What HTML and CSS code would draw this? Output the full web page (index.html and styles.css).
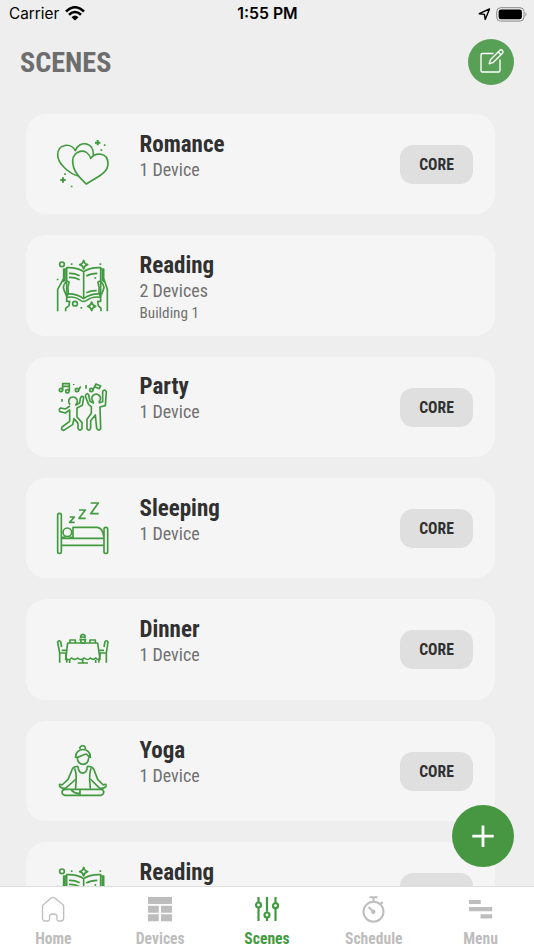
FILE: index.html
```html
<!DOCTYPE html>
<html lang="en">
<head>
<meta charset="utf-8">
<title>Scenes</title>
<link rel="stylesheet" href="styles.css">
</head>
<body>
<svg class="defs" aria-hidden="true">
  <symbol id="hearts" viewBox="0 0 240 240">
    <g transform="translate(0 2)">
    <path d="M124 178C110 164 83 144 83 108C83 78 126 66 137 101C151 82 189 82 189 117C189 148 148 160 124 178Z"/>
    <path d="M100 154C74 148 38 117 38 91C38 58 78 52 91 78C102 47 147 50 145 91"/>
    <path d="M158 46v16M150 54h16M54 158v16M46 166h16" class="thick"/>
    <path d="M179 59v5M169 74v5M60 146v5M80 183v5"/>
    </g>
  </symbol>
  <symbol id="book" viewBox="0 0 240 240">
    <circle cx="51" cy="58" r="7"/>
    <path d="M116 46q2 11 12 13q-10 2-12 13q-2-11-12-13q10-2 12-13ZM140 171q2 11 12 13q-10 2-12 13q-2-11-12-13q10-2 12-13Z"/>
    <circle cx="90" cy="176" r="7"/>
    <path d="M80 55v5M166 55v5M38 101v5M151 96v5M109 186v5"/>
    <path d="M116 80C101 70 84 67 65 68V147C86 145 101 150 116 161C131 150 146 145 167 147V68C148 67 131 70 116 80ZM116 80V161"/>
    <path d="M72 85q16-1 32 7M72 97q16-1 32 7M124 93q13-8 33-8M124 143q16-7 31-6M65 157q25-4 43 10q8 5 16 0q18-14 43-10"/>
    <path d="M65 72H56V112M60 72V108M167 72H176V112M172 72V108M56 100L38 133V199M176 100L187 133V199"/>
    <path d="M72 112C66 103 57 115 55 127C57 139 63 148 65 153C76 147 65 130 70 122ZM159 112C165 103 174 115 177 127C175 139 169 148 167 153C156 147 166 130 161 122Z"/>
    <path d="M65 153V169H74L72 182L62 190V199M167 153V169H158L160 182L168 190V199"/>
  </symbol>
  <symbol id="party" viewBox="0 0 240 240">
    <circle cx="48" cy="69" r="5"/><circle cx="67" cy="73" r="5"/>
    <path d="M53 69V50H73V73M53 58H73"/>
    <circle cx="96" cy="69" r="5"/><path d="M101 69L107 58M86 51v3M123 54v11M51 96v8"/>
    <circle cx="139" cy="69" r="5"/><path d="M144 68L153 51L167 57L161 67M149 59l14 6"/>
    <path d="M76 113A13 13 0 1 1 91 114M146 105A13 13 0 1 1 161 105"/>
    <path d="M75 117L61 126L47 123Q40 128 45 134L61 138L74 129V144"/>
    <path d="M74 144V163L51 180Q47 189 56 190L83 173L87 155L99 169V184Q104 194 111 185V167L96 150V123L112 115L116 91Q110 84 106 94L104 108L91 115"/>
    <path d="M131 113L121 87Q126 75 131 84L135 103L147 109M131 113L139 119V139L126 157V185Q132 194 137 184V161L151 144L155 184Q161 194 167 185L165 120L181 116L184 74Q179 65 173 73V104L161 108"/>
  </symbol>
  <symbol id="bed" viewBox="0 0 240 240">
    <rect x="38" y="76" width="11" height="120" rx="5"/>
    <rect x="177" y="118" width="11" height="78" rx="5"/>
    <circle cx="67" cy="133" r="13"/>
    <path d="M49 151H177M49 172H177M49 148H60M74 148H84M84 151V118H157Q172 119 176 145"/>
    <path d="M74 87H88L74 103H89M102 66H121L102 91H122M137 45H160L137 77H161"/>
  </symbol>
  <symbol id="dinner" viewBox="0 0 240 240">
    <path d="M68 102H158L165 150Q158 154 152 147Q145 155 136 147Q128 156 118 147Q107 156 98 147Q89 155 80 147Q72 155 62 151Z"/>
    <path d="M75 102V93H91V102M135 102V93H151V102M103 92H124M107 94L109 102H119L121 94M107 88V80Q113 72 120 80V88M105 84H122"/>
    <path d="M74 153V162M152 153V162M113 153V161M98 162H129"/>
    <path d="M50 114L47 98Q42 92 38 99L44 132V161M50 124H64M46 132H62M62 132L66 161M177 114L180 98Q185 92 189 99L184 132V161M177 124H163M183 132H164M166 132L161 161"/>
  </symbol>
  <symbol id="yoga" viewBox="0 0 240 240">
    <path d="M105 54V49Q113 39 121 49V54M92 81C89 47 139 47 136 81M92 79H97C106 79 109 71 124 69Q129 75 136 79M97 79C96 107 132 107 131 79"/>
    <path d="M99 106Q82 105 79 122L69 145L51 162Q41 156 44 166Q53 176 64 170L93 144M127 106Q146 105 149 122L158 145L175 162Q185 156 183 166Q174 176 162 170L136 144"/>
    <path d="M99 106C101 133 126 133 127 106M89 112C98 136 92 150 92 173M138 112C130 136 135 150 136 173"/>
    <path d="M59 175H169Q177 177 176 184Q176 191 167 193H60Q51 191 51 184Q51 177 59 175ZM79 178Q90 188 105 188M105 176V193"/>
  </symbol>
</svg>

<div class="phone">
  <div class="status">
    <div class="carrier"><span>Carrier</span>
      <svg width="20" height="16" viewBox="0 0 20 16"><path d="M1 5.5Q10-3 19 5.5M4 8.8Q10 3.2 16 8.8" fill="none" stroke="#000" stroke-width="2.6"/><path d="M6.5 11.2Q10 8 13.5 11.2L10 14.5Z"/></svg>
    </div>
    <div class="clock">1:55 PM</div>
    <div class="power">
      <svg width="13" height="13" viewBox="0 0 13 13"><path d="M1.2 5.7L11.5 1L7.2 11.4L6.4 6.4Z" fill="none" stroke="#000" stroke-width="1.4" stroke-linejoin="round"/></svg>
      <svg width="32" height="15" viewBox="0 0 32 15"><rect x=".7" y=".7" width="27.3" height="13.4" rx="4" fill="none" stroke="#888"/><rect x="2.6" y="2.5" width="23.3" height="9.8" rx="2.3"/><path d="M29.5 5Q31.5 7.4 29.5 9.8Z" fill="#888"/></svg>
    </div>
  </div>

  <header class="header">
    <h1>SCENES</h1>
    <button class="edit" aria-label="Edit scenes"><svg width="46" height="46" viewBox="0 0 46 46"><path d="M25.5 14.5H14.5Q13 14.5 13 16V31.5Q13 33 14.5 33H30.5Q32 33 32 31.5V20.5M21.2 24.8L22.6 20.5L31.7 11.4Q33 10.1 34.5 11.4Q35.8 12.7 34.5 14.2L25.4 23.3ZM30.2 13L33 15.8"/></svg></button>
  </header>

  <main class="scenes">
    <article class="card"><svg class="art"><use href="#hearts"/></svg><div class="info"><h2>Romance</h2><p>1 Device</p></div><span class="tag">CORE</span></article>
    <article class="card"><svg class="art"><use href="#book"/></svg><div class="info"><h2>Reading</h2><p>2 Devices</p><small>Building 1</small></div></article>
    <article class="card"><svg class="art"><use href="#party"/></svg><div class="info"><h2>Party</h2><p>1 Device</p></div><span class="tag">CORE</span></article>
    <article class="card"><svg class="art"><use href="#bed"/></svg><div class="info"><h2>Sleeping</h2><p>1 Device</p></div><span class="tag">CORE</span></article>
    <article class="card"><svg class="art"><use href="#dinner"/></svg><div class="info"><h2>Dinner</h2><p>1 Device</p></div><span class="tag">CORE</span></article>
    <article class="card"><svg class="art"><use href="#yoga"/></svg><div class="info"><h2>Yoga</h2><p>1 Device</p></div><span class="tag">CORE</span></article>
    <article class="card"><svg class="art"><use href="#book"/></svg><div class="info"><h2>Reading</h2></div><span class="tag"></span></article>
  </main>

  <button class="add" aria-label="Add scene"><svg width="62" height="62" viewBox="0 0 62 62"><path d="M31 20.5V42M20.3 31.2H41.7"/></svg></button>

  <nav class="tabs">
    <a class="tab"><svg class="line" width="28" height="28" viewBox="0 0 28 28"><path d="M3.5 11.5Q3.5 10.3 4.5 9.5L12.3 3Q14 1.7 15.7 3L23.7 9.5Q24.7 10.3 24.7 11.5V23Q24.7 26 21.8 26H19.5Q18 26 18 24.5V21.5Q18 19 14 19Q10.5 19 10.5 21.5V24.5Q10.5 26 9 26H6.3Q3.5 26 3.5 23Z"/></svg><span>Home</span></a>
    <a class="tab"><svg class="solid" width="28" height="28" viewBox="0 0 28 28"><path d="M2 2H26V9H2ZM2 10.7H12.8V17.8H2ZM15 10.7H26V17.8H15ZM2 19.3H12.8V26.3H2ZM15 19.3H26V26.3H15Z"/></svg><span>Devices</span></a>
    <a class="tab active"><svg class="sliders" width="28" height="28" viewBox="0 0 28 28"><path d="M5.5 2V7M5.5 13V26M14 2V16.8M14 22.8V26M22.5 2V7.5M22.5 14V26"/><circle cx="5.5" cy="10" r="2.5"/><circle cx="14" cy="20" r="2.5"/><circle cx="22.5" cy="10.7" r="2.5"/></svg><span>Scenes</span></a>
    <a class="tab"><svg class="watch" width="28" height="28" viewBox="0 0 28 28"><circle cx="13.5" cy="16.7" r="10"/><path d="M9.5 2.2H17.5M13.5 3V7M20.3 9.5L22.7 7M8.5 12L13 16.5"/><circle cx="13.3" cy="16.8" r="1.2"/></svg><span>Schedule</span></a>
    <a class="tab"><svg class="solid" width="28" height="28" viewBox="0 0 28 28"><path d="M2 5H13.7V9.1H2ZM2 12H25.2V16.3H2ZM13.5 19.3H25.2V23.5H13.5Z"/></svg><span>Menu</span></a>
  </nav>
</div>
</body>
</html>
```
FILE: styles.css
```css
* { box-sizing: border-box; }
body { margin: 0; background: #eee; }
h1, h2, p { margin: 0; }
button { border: 0; padding: 0; }
.defs { position: absolute; width: 0; height: 0; }
.phone {
  position: relative;
  width: 534px;
  height: 950px;
  overflow: hidden;
  display: flex;
  flex-direction: column;
  background: #eee;
  font-family: "Roboto Condensed", Roboto, sans-serif;
  font-stretch: 75%;
}
.status {
  flex: none;
  height: 28px;
  padding: 0 6px 0 9px;
  display: grid;
  grid-template-columns: 1fr auto 1fr;
  align-items: center;
  font: 400 15.3px/28px Inter, sans-serif;
  color: #000;
}
.carrier, .power { display: flex; align-items: center; }
.carrier { gap: 6px; }
.power { justify-content: flex-end; gap: 5px; }
.clock { font-size: 15.8px; font-weight: 600; margin-right: 2px; }
.header {
  flex: none;
  height: 86px;
  padding: 11px 20px 0;
  display: flex;
  align-items: flex-start;
  justify-content: space-between;
}
h1 { font-size: 28.2px; line-height: 48px; font-weight: 700; color: #6d6d6d; }
.edit { width: 46px; height: 46px; border-radius: 50%; background: #58a056; }
.edit svg, .add svg { display: block; }
.edit path { fill: none; stroke: #fff; stroke-width: 1.35; stroke-linejoin: round; }
.scenes {
  flex: 1;
  min-height: 0;
  overflow: hidden;
  padding-left: 26px;
  display: flex;
  flex-direction: column;
  gap: 21px;
}
.card {
  flex: none;
  width: 469px;
  height: 100.35px;
  border-radius: 20px;
  background: #f5f5f5;
  display: flex;
  align-items: flex-start;
  padding: 10px 22px 0 19px;
}
.art {
  flex: none;
  width: 80px;
  height: 80px;
  fill: none;
  stroke: #429a40;
  stroke-width: 5;
  stroke-linejoin: round;
}
.thick { stroke-width: 6; }
.info { flex: 1; padding: 6.5px 0 0 14.5px; color: #6c6c6c; }
h2 { font-size: 23px; line-height: 28px; font-weight: 700; color: #303030; }
.info p { font-size: 18px; line-height: 22px; color: #707070; }
.info small { display: block; font-size: 15.2px; line-height: 22px; color: #707070; }
.tag {
  width: 73px;
  height: 39px;
  margin-top: 21px;
  border-radius: 13px;
  background: #dfdfdf;
  color: #303030;
  font-size: 15.6px;
  line-height: 40px;
  font-weight: 700;
  text-align: center;
}
.add {
  position: absolute;
  right: 20px;
  bottom: 83px;
  width: 62px;
  height: 62px;
  border-radius: 50%;
  background: #469642;
}
.add path { stroke: #fff; stroke-width: 2.8; }
.tabs {
  flex: none;
  height: 64px;
  border-top: 1px solid #dedede;
  background: #fff;
  display: grid;
  grid-template-columns: repeat(5, 1fr);
}
.tab {
  padding-top: 8px;
  display: flex;
  flex-direction: column;
  align-items: center;
  color: #bdbdbd;
  font-size: 15.6px;
  line-height: 20px;
  font-weight: 700;
}
.tab span { margin-top: 6px; }
.active { color: #429a40; }
.tab svg { fill: none; stroke: currentColor; stroke-width: 2; }
.tab .line { stroke-width: 1.3; }
.tab .solid { fill: currentColor; stroke: none; }
.tab .sliders { stroke-width: 2.2; }
```
